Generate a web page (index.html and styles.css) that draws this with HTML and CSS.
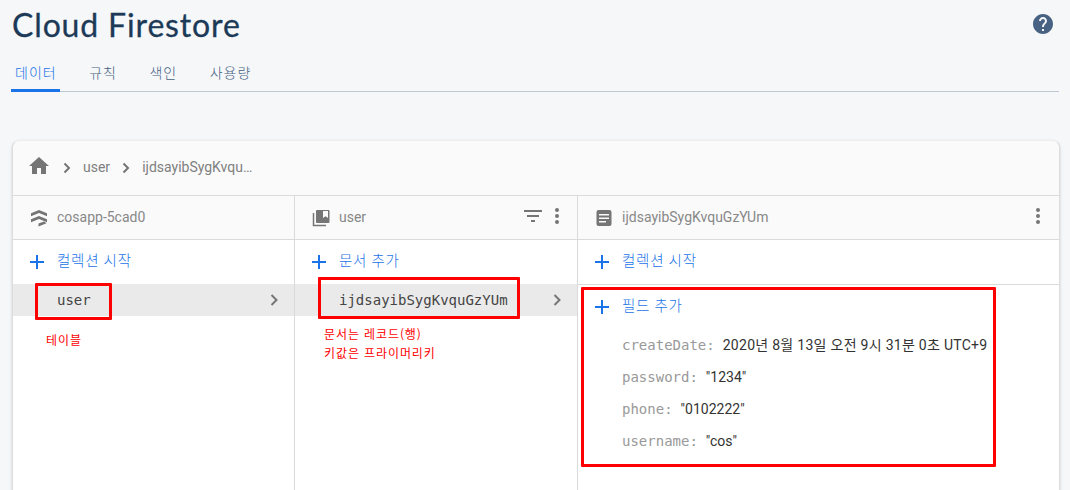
FILE: index.html
```html
<!DOCTYPE html>
<html lang="ko">
<head>
<meta charset="utf-8">
<title>Cloud Firestore</title>
<link rel="stylesheet" href="styles.css">
</head>
<body>
<header class="page-header">
  <h1 class="title">Cloud Firestore</h1>
  <svg class="help" viewBox="0 0 24 24"><path d="M12 2C6.480 2 2 6.480 2 12s4.480 10 10 10 10-4.480 10-10S17.520 2 12 2zm1 17h-2v-2h2v2zm2.070-7.750l-.9.920C13.450 12.900 13 13.500 13 15h-2v-.5c0-1.100.45-2.100 1.170-2.830l1.240-1.260c.37-.36.59-.86.59-1.410 0-1.100-.9-2-2-2s-2 .9-2 2H8c0-2.210 1.790-4 4-4s4 1.790 4 4c0 .88-.36 1.680-.93 2.250z"/></svg>
</header>
<nav class="tabs">
  <a class="tab active">데이터</a>
  <a class="tab">규칙</a>
  <a class="tab">색인</a>
  <a class="tab">사용량</a>
</nav>
<main class="card">
  <div class="crumbs">
    <svg class="home" viewBox="0 0 24 24"><path d="M10 20v-6h4v6h5v-8h3L12 3 2 12h3v8z"/></svg>
    <svg class="sep" viewBox="0 0 8 12"><path d="M1.500 1.500L6 6l-4.500 4.500"/></svg>
    <span>user</span>
    <svg class="sep" viewBox="0 0 8 12"><path d="M1.500 1.500L6 6l-4.500 4.500"/></svg>
    <span class="crumb-doc">ijdsayibSygKvqu…</span>
  </div>
  <div class="panels">
    <section class="panel">
      <div class="panel-head">
        <svg class="head-icon" viewBox="0 0 18 18"><path d="M1 4.300L9 1l8 3.300v3L9 4 1 7.300zM1 10.300L9 7l8 3.300v3L9 10 1 13.300zM8.500 14.500l5.500-2 2.500 1.700-8 3.300z"/></svg>
        <span class="head-name">cosapp-5cad0</span>
      </div>
      <div class="add"><svg class="plus" viewBox="0 0 14 14"><path d="M7 0v14M0 7h14"/></svg><span>컬렉션 시작</span></div>
      <div class="item"><span>user</span><svg class="chev" viewBox="0 0 8 12"><path d="M1.500 1L6.500 6l-5 5"/></svg></div>
    </section>
    <section class="panel">
      <div class="panel-head">
        <svg class="head-icon" viewBox="0 0 18 18"><path d="M1.500 4v12.500H14" class="line"/><path fill-rule="evenodd" d="M5 1h11.500q1 0 1 1v11q0 1-1 1H5q-1 0-1-1V2q0-1 1-1zM11 2v7l2.500-1.700L16 9V2z"/></svg>
        <span class="head-name">user</span>
        <svg class="filter" viewBox="0 0 18 12"><path d="M0 0h18v2H0zM3 5h12v2H3zM7 10h4v2H7z"/></svg>
        <svg class="more" viewBox="0 0 4 16"><circle cx="2" cy="2" r="2"/><circle cx="2" cy="8" r="2"/><circle cx="2" cy="14" r="2"/></svg>
      </div>
      <div class="add"><svg class="plus" viewBox="0 0 14 14"><path d="M7 0v14M0 7h14"/></svg><span>문서 추가</span></div>
      <div class="item"><span>ijdsayibSygKvquGzYUm</span><svg class="chev" viewBox="0 0 8 12"><path d="M1.500 1L6.500 6l-5 5"/></svg></div>
    </section>
    <section class="panel">
      <div class="panel-head last-head">
        <svg class="head-icon" viewBox="0 0 18 18"><path fill-rule="evenodd" d="M3.500 1h11q2 0 2 2v12q0 2-2 2h-11q-2 0-2-2V3q0-2 2-2zM4 5v1.500h10V5zM4 8.500V10h10V8.500zM4 12v1.500h7V12z"/></svg>
        <span class="head-name">ijdsayibSygKvquGzYUm</span>
        <svg class="more" viewBox="0 0 4 16"><circle cx="2" cy="2" r="2"/><circle cx="2" cy="8" r="2"/><circle cx="2" cy="14" r="2"/></svg>
      </div>
      <div class="add ruled"><svg class="plus" viewBox="0 0 14 14"><path d="M7 0v14M0 7h14"/></svg><span>컬렉션 시작</span></div>
      <div class="add"><svg class="plus" viewBox="0 0 14 14"><path d="M7 0v14M0 7h14"/></svg><span>필드 추가</span></div>
      <dl class="fields">
        <div class="field"><dt>createDate:</dt><dd class="date">2020년 8월 13일 오전 9시 31분 0초 UTC+9</dd></div>
        <div class="field"><dt>password:</dt><dd>"1234"</dd></div>
        <div class="field"><dt>phone:</dt><dd>"0102222"</dd></div>
        <div class="field"><dt>username:</dt><dd>"cos"</dd></div>
      </dl>
    </section>
  </div>
</main>
<div class="mark mark-collection"></div>
<div class="mark mark-document"></div>
<div class="mark mark-fields"></div>
<p class="note note-collection">테이블</p>
<p class="note note-document">문서는 레코드(행)<br>키값은 프라이머리키</p>
</body>
</html>
```

FILE: styles.css
```css
* { box-sizing: border-box; }
body {
  margin: 0;
  width: 1070px;
  height: 490px;
  overflow: hidden;
  position: relative;
  background: #f5f7f9;
  font-family: Roboto, "Noto Sans CJK KR", sans-serif;
  font-size: 14px;
}
svg { display: block; flex: none; fill: #757575; }
.page-header {
  display: flex;
  justify-content: space-between;
  height: 52px;
  padding: 0 15px 0 12px;
}
.title {
  margin: 0;
  font: 400 32px/50px Lato, sans-serif;
  color: #1c3a57;
  letter-spacing: 0.85px;
  -webkit-text-stroke: 0.3px #1c3a57;
}
.help { width: 24px; height: 24px; margin-top: 12px; fill: #476282; }
.tabs {
  display: flex;
  gap: 25px;
  height: 40px;
  margin: 0 11px;
  border-bottom: 1px solid #bccad8;
}
.tab {
  height: 40px;
  padding: 0 3.5px 0 4px;
  line-height: 42px;
  color: #476282;
  font-weight: 300;
  letter-spacing: 1px;
}
.active { color: #1a73e8; border-bottom: 3px solid #1a73e8; border-radius: 2px 2px 0 0; }
.card {
  width: 1048px;
  height: 370px;
  margin: 48px 0 0 12px;
  border: 1px solid #dcdddf;
  border-top-color: #eceef0;
  border-radius: 8px 8px 0 0;
  box-shadow: 0 1px 3px rgba(60, 64, 67, 0.22);
  background: #fff;
  overflow: hidden;
}
.crumbs {
  display: flex;
  align-items: center;
  height: 55px;
  padding: 0 0 1px 14px;
  background: #fafafa;
  border-bottom: 1px solid #dadada;
  color: #808080;
}
.home { width: 24px; height: 24px; margin-right: 12px; margin-top: -3px; }
.sep { width: 8px; height: 12px; margin-right: 12px; margin-top: 1px; }
.crumbs span { margin-right: 12px; padding-bottom: 1px; }
.sep path, .chev path { fill: none; stroke: #757575; stroke-width: 2; }
.panels {
  display: grid;
  grid-template-columns: 282px 283px 1fr;
  height: 315px;
}
.panel { border-right: 1px solid #dadada; }
.panel:last-child { border-right: 0; }
.panel-head {
  display: flex;
  align-items: center;
  height: 44px;
  padding-left: 17px;
  padding-right: 18px;
  background: #fafafa;
  border-bottom: 1px solid #dadada;
  color: #888;
}
.last-head { padding-right: 19px; }
.head-icon { width: 18px; height: 18px; margin-right: 9px; }
.head-icon .line { fill: none; stroke: #757575; stroke-width: 1.5; }
.head-name { flex: 1; padding-bottom: 2px; }
.filter { width: 18px; height: 12px; margin-right: 13px; margin-top: -3px; }
.more { width: 4px; height: 16px; margin-top: -3px; }
.add {
  display: flex;
  align-items: center;
  height: 44px;
  padding-left: 17px;
  color: #1a73e8;
  font-size: 14.5px;
  font-weight: 300;
  letter-spacing: 0.75px;
}
.add span { padding-bottom: 5px; }
.plus { width: 14px; height: 14px; margin-right: 13px; }
.plus path { stroke: #1a73e8; stroke-width: 2; }
.ruled { height: 45px; border-bottom: 1px solid #dadada; }
.item {
  display: flex;
  align-items: center;
  justify-content: space-between;
  height: 32px;
  padding: 0 16px 0 44px;
  background: #eaeaea;
  color: #444;
  font-family: "DejaVu Sans Mono", monospace;
}
.chev { width: 8px; height: 12px; }
.fields { margin: 0; padding-left: 44px; }
.field { display: flex; height: 32px; line-height: 32px; }
dt { font-family: "DejaVu Sans Mono", monospace; color: #999; }
dd { margin: 0 0 0 8px; color: #333; }
.date { letter-spacing: 0.28px; }
.mark { position: absolute; border: 3px solid #f00; border-radius: 1px; }
.mark-collection { left: 35px; top: 283px; width: 77px; height: 37px; }
.mark-document { left: 318px; top: 277px; width: 202px; height: 42px; }
.mark-fields { left: 581px; top: 287px; width: 415px; height: 180px; }
.note {
  position: absolute;
  margin: 0;
  font: 400 12px/19px "Noto Sans CJK KR", sans-serif;
  letter-spacing: 0.9px;
  color: #f00;
  white-space: nowrap;
}
.note-collection { left: 46px; top: 330px; }
.note-document { left: 324px; top: 324px; }
```
